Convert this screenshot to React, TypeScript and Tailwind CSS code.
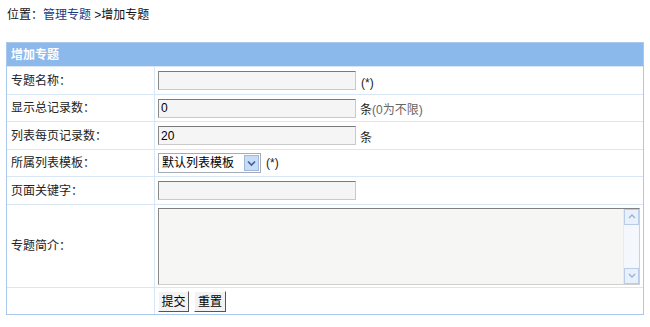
import React from "react"

const font = { fontFamily: '"Liberation Sans", "Noto Sans CJK SC", sans-serif' }

function Row({ label, h, children }: { label: string; h: string; children?: React.ReactNode }) {
  return (
    <div className={`flex border-t border-[#d9e6f5] ${h}`}>
      <div className="w-[148px] shrink-0 flex items-center pl-[4px] border-r border-[#d9e6f5] text-[12px] text-[#222]">{label}</div>
      <div className="flex-1 flex items-center pl-[3px] text-[12px] text-[#222]">{children}</div>
    </div>
  )
}

function TextBox({ value = "" }: { value?: string }) {
  return (
    <div className="w-[198px] h-[19px] bg-[#f6f5f5] border border-[#c9c9c9] border-t-[#7a7a7a] border-l-[#8a8a8a] flex items-center pl-[2px] text-[12px] text-black">
      {value}
    </div>
  )
}

export default function App() {
  return (
    <div className="w-[650px] h-[327px] bg-white overflow-hidden" style={font}>
      <div className="h-[30px] pl-[7px] pt-[6px] text-[12px] text-[#111]">
        位置：<span className="text-[#1a3a80]">管理专题</span> &gt;增加专题
      </div>
      <div className="mt-[12px] ml-[6px] w-[638px] border border-[#a9c8ec]">
        <div className="h-[23px] bg-[#8bb9ec] flex items-center pl-[4px] text-[12px] font-bold text-white">增加专题</div>
        <Row label="专题名称：" h="h-[28px]">
          <TextBox />
          <span className="ml-[5px] mt-[4px]">(*)</span>
        </Row>
        <Row label="显示总记录数：" h="h-[27px]">
          <TextBox value="0" />
          <span className="ml-[4px] mt-[4px]">条<span className="text-[#666]">(0为不限)</span></span>
        </Row>
        <Row label="列表每页记录数：" h="h-[28px]">
          <TextBox value="20" />
          <span className="ml-[4px] mt-[4px]">条</span>
        </Row>
        <Row label="所属列表模板：" h="h-[27px]">
          <div className="w-[103px] h-[20px] border border-[#a5acb5] bg-white flex items-center">
            <span className="flex-1 pl-[3px] text-[12px] text-black">默认列表模板</span>
            <div className="w-[15px] h-[16px] mr-[1px] bg-[#c8dcf6] border border-[#9eb8dd] flex items-center justify-center">
              <svg width="9" height="7" viewBox="0 0 9 7"><path d="M1 1.5 L4.5 5 L8 1.5" stroke="#3d5f9a" strokeWidth="1.6" fill="none" /></svg>
            </div>
          </div>
          <span className="ml-[5px]">(*)</span>
        </Row>
        <Row label="页面关键字：" h="h-[28px]">
          <TextBox />
        </Row>
        <Row label="专题简介：" h="h-[83px]">
          <div className="w-[482px] h-[77px] bg-[#f6f6f5] border border-[#d0d0d0] border-t-[#808080] border-l-[#8a8a8a] flex justify-end">
            <div className="w-[16px] bg-[#f4f8fd] border-l border-[#e3ebf6] flex flex-col justify-between">
              <div className="h-[16px] border border-[#b9cde9] bg-[#e7f0fb] flex items-center justify-center">
                <svg width="8" height="5" viewBox="0 0 8 5"><path d="M1 4 L4 1 L7 4" stroke="#9ab1d4" strokeWidth="1.3" fill="none" /></svg>
              </div>
              <div className="h-[16px] border border-[#b9cde9] bg-[#e7f0fb] flex items-center justify-center">
                <svg width="8" height="5" viewBox="0 0 8 5"><path d="M1 1 L4 4 L7 1" stroke="#9ab1d4" strokeWidth="1.3" fill="none" /></svg>
              </div>
            </div>
          </div>
        </Row>
        <Row label="" h="h-[27px]">
          <div className="flex gap-[5px] mt-[1px]">
            <button className="w-[31px] h-[21px] bg-[#f2f2f2] border border-[#ffffff] border-r-[#555] border-b-[#555] text-[12px] text-black">提交</button>
            <button className="w-[32px] h-[21px] bg-[#f2f2f2] border border-[#ffffff] border-r-[#555] border-b-[#555] text-[12px] text-black">重置</button>
          </div>
        </Row>
      </div>
    </div>
  )
}
